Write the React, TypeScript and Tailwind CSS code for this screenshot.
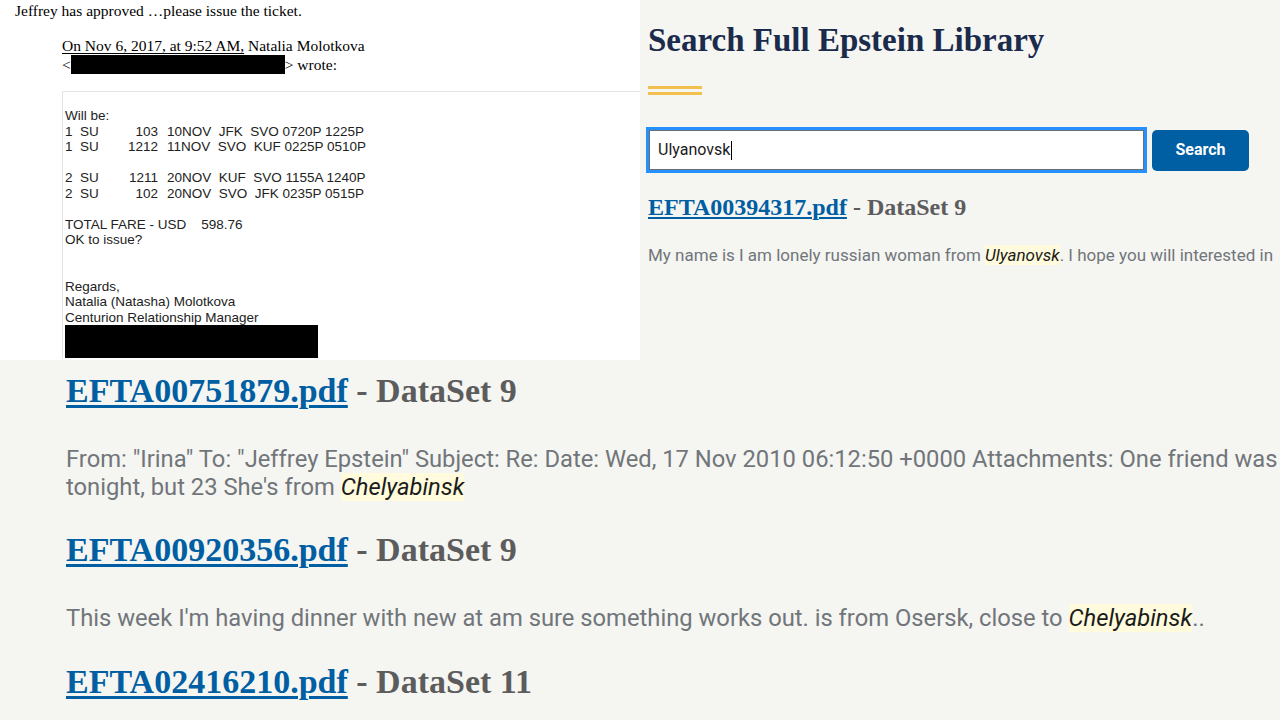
import React from 'react';

const serif = "font-['Liberation_Serif','Times_New_Roman',serif]";
const arial = "font-['Liberation_Sans',Arial,sans-serif]";
const roboto = "font-['Roboto','Liberation_Sans',sans-serif]";

const flights = [
  ['1', '103', '10NOV  JFK  SVO 0720P 1225P'],
  ['1', '1212', '11NOV  SVO  KUF 0225P 0510P'],
  null,
  ['2', '1211', '20NOV  KUF  SVO 1155A 1240P'],
  ['2', '102', '20NOV  SVO  JFK 0235P 0515P'],
];

const Hit = ({ children }: { children: React.ReactNode }) => (
  <span className="italic text-[#1b1b1b] bg-[#fffbdc]">{children}</span>
);

const EmailScan = () => (
  <div className="w-[640px] h-[360px] bg-white overflow-hidden text-black">
    <div className={`${serif} text-[15.5px] leading-[18px] pl-[15px] pt-[2px]`}>
      Jeffrey has approved …please issue the ticket.
    </div>
    <div className="ml-[62px] mt-[17px]">
      <div className={`${serif} text-[15.5px] leading-[18px]`}>
        <div>
          <span className="underline underline-offset-2">On Nov 6, 2017, at 9:52 AM,</span> Natalia Molotkova
        </div>
        <div className="flex items-center">
          <span>&lt;</span>
          <span className="inline-block w-[214px] h-[19px] bg-black"></span>
          <span>&gt; wrote:</span>
        </div>
      </div>
      <div className={`${arial} mt-[17px] border-t border-l border-[#e4e4e4] pt-[16px] pl-[2px] text-[13.5px] leading-[15.5px] text-[#222]`}>
        <div>Will be:</div>
        {flights.map((f, i) =>
          f ? (
            <div key={i} className="flex whitespace-pre">
              <span className="w-[15px]">{f[0]}</span>
              <span className="w-[20px]">SU</span>
              <span className="w-[58px] text-right">{f[1]}</span>
              <span className="pl-[9px]">{f[2]}</span>
            </div>
          ) : (
            <div key={i} className="h-[15.5px]"></div>
          )
        )}
        <div className="h-[15.5px]"></div>
        <div className="whitespace-pre">TOTAL FARE - USD    598.76</div>
        <div>OK to issue?</div>
        <div className="h-[31px]"></div>
        <div>Regards,</div>
        <div>Natalia (Natasha) Molotkova</div>
        <div>Centurion Relationship Manager</div>
        <div className="w-[253px] h-[33px] bg-black"></div>
      </div>
    </div>
  </div>
);

const SearchPanel = () => (
  <div className="flex-1 h-[360px] overflow-hidden pl-[8px] pt-[20px]">
    <h1 className={`${serif} font-bold text-[33px] leading-[40px] text-[#1b2b4b] whitespace-nowrap`}>
      Search Full Epstein Library
    </h1>
    <div className="mt-[26px] w-[54px] h-[9px] border-y-[3px] border-[#f2c04e]"></div>
    <div className="mt-[32px] ml-[-2px] flex items-center gap-[5px]">
      <div className="w-[501px] h-[46px] border-[3px] border-[#2491ff]">
        <div className={`${roboto} h-full bg-white border border-[#6b6f75] pl-[8px] flex items-center text-[16px] text-[#1b1b1b]`}>
          Ulyanovsk
          <span className="inline-block w-px h-[19px] bg-black ml-px"></span>
        </div>
      </div>
      <button className={`${roboto} w-[97px] h-[41px] bg-[#005ea2] rounded-[5px] text-white font-bold text-[16px]`}>
        Search
      </button>
    </div>
    <div className={`${serif} mt-[19px] text-[24px] leading-[30px] whitespace-nowrap`}>
      <a className="text-[#005ea2] font-semibold underline decoration-2 underline-offset-2">EFTA00394317.pdf</a>
      <span className="text-[#5c5c5c] font-semibold"> - DataSet 9</span>
    </div>
    <p className={`${roboto} mt-[21px] text-[17px] leading-[24px] text-[#71767a] whitespace-nowrap`}>
      My name is I am lonely russian woman from <Hit>Ulyanovsk</Hit>. I hope you will interested in
    </p>
  </div>
);

const Result = ({ file, set, mt }: { file: string; set: string; mt: string }) => (
  <div className={`${serif} ${mt} text-[34px] leading-[40px] whitespace-nowrap`}>
    <a className="text-[#005ea2] font-semibold underline decoration-[3px] underline-offset-[3px]">{file}</a>
    <span className="text-[#5c5c5c] font-semibold"> - DataSet {set}</span>
  </div>
);

export default function App() {
  return (
    <div className="w-[1280px] h-[720px] overflow-hidden bg-[#f5f5f2] flex flex-col">
      <div className="flex">
        <EmailScan />
        <SearchPanel />
      </div>
      <div className="flex-1 overflow-hidden pl-[66px] pt-[11px]">
        <Result file="EFTA00751879.pdf" set="9" mt="" />
        <div className={`${roboto} mt-[34px] text-[23.75px] leading-[28px] text-[#71767a] whitespace-nowrap`}>
          <div>
            From: "Irina" To: "Jeffrey Epstein" Subject: Re: Date: Wed, 17 Nov 2010 06:12:50 +0000 Attachments: One friend was
          </div>
          <div>
            tonight, but 23 She's from <Hit>Chelyabinsk</Hit>
          </div>
        </div>
        <Result file="EFTA00920356.pdf" set="9" mt="mt-[29px]" />
        <p className={`${roboto} mt-[34px] text-[23.75px] leading-[28px] text-[#71767a] whitespace-nowrap`}>
          This week I'm having dinner with new at am sure something works out. is from Osersk, close to <Hit>Chelyabinsk</Hit>..
        </p>
        <Result file="EFTA02416210.pdf" set="11" mt="mt-[30px]" />
      </div>
    </div>
  );
}
